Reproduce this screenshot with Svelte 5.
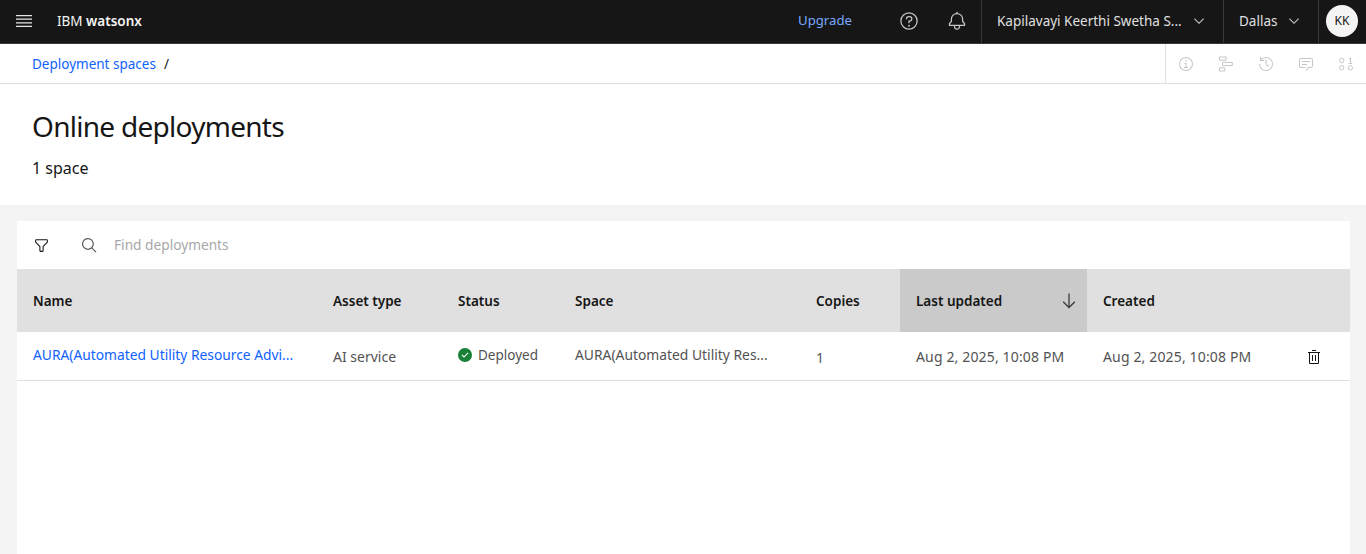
<script>
  const columns = [
    { label: 'Name', width: 300 },
    { label: 'Asset type', width: 125 },
    { label: 'Status', width: 117 },
    { label: 'Space', width: 241 },
    { label: 'Copies', width: 100 },
    { label: 'Last updated', width: 187, sorted: true },
    { label: 'Created', width: 263 }
  ];
</script>

<div class="page">
  <header class="topbar">
    <button class="menu" aria-label="Menu">
      <svg width="16" height="12" viewBox="0 0 16 12"><path d="M0 0h16v1.200H0zM0 3.600h16v1.200H0zM0 7.200h16v1.200H0zM0 10.800h16V12H0z" fill="#e8e8e8"/></svg>
    </button>
    <div class="brand">IBM <strong>watsonx</strong></div>
    <a class="upgrade" href="#upgrade">Upgrade</a>
    <button class="top-icon help" aria-label="Help">
      <svg width="20" height="20" viewBox="0 0 32 32" fill="#c6c6c6"><path d="M16,2A14,14,0,1,0,30,16,14,14,0,0,0,16,2Zm0,26A12,12,0,1,1,28,16,12,12,0,0,1,16,28Z"/><circle cx="16" cy="23.500" r="1.500"/><path d="M17,8H15.500A4.490,4.490,0,0,0,11,12.500V13h2v-.5A2.500,2.500,0,0,1,15.500,10H17a2.500,2.500,0,0,1,0,5H15v4.500h2V17a4.500,4.500,0,0,0,0-9Z"/></svg>
    </button>
    <button class="top-icon bell" aria-label="Notifications">
      <svg width="20" height="20" viewBox="0 0 32 32" fill="#c6c6c6"><path d="M28.7071,19.293,26,16.5859V13a10.0136,10.0136,0,0,0-9-9.9492V1H15V3.0508A10.0136,10.0136,0,0,0,6,13v3.5859L3.2929,19.293A1,1,0,0,0,3,20v3a1,1,0,0,0,1,1h7v.7768a5.152,5.152,0,0,0,4.5,5.1987A5.0057,5.0057,0,0,0,21,25V24h7a1,1,0,0,0,1-1V20A1,1,0,0,0,28.7071,19.293ZM19,25a3,3,0,0,1-6,0V24h6Zm8-3H5V20.4141L7.707,17.707A1,1,0,0,0,8,17V13a8,8,0,0,1,16,0v4a1,1,0,0,0,.293.707L27,20.4141Z"/></svg>
    </button>
    <div class="select account">
      <span>Kapilavayi Keerthi Swetha S...</span>
      <svg width="16" height="16" viewBox="0 0 32 32" fill="#c6c6c6"><path d="M16 22L6 12 7.400 10.600 16 19.200 24.600 10.600 26 12z"/></svg>
    </div>
    <div class="select region">
      <span>Dallas</span>
      <svg width="16" height="16" viewBox="0 0 32 32" fill="#c6c6c6"><path d="M16 22L6 12 7.400 10.600 16 19.200 24.600 10.600 26 12z"/></svg>
    </div>
    <div class="avatar-wrap"><div class="avatar">KK</div></div>
  </header>

  <nav class="crumbs">
    <div class="crumb-text"><a href="#spaces">Deployment spaces</a><span class="slash">/</span></div>
    <div class="tools">
      <svg width="16" height="16" viewBox="0 0 32 32"><path d="M17 22v-8h-4v2h2v6h-3v2h8v-2h-3zM16 8a1.500 1.500 0 1 0 1.500 1.500A1.500 1.500 0 0 0 16 8z"/><path d="M16 30a14 14 0 1 1 14-14 14 14 0 0 1-14 14zm0-26a12 12 0 1 0 12 12A12 12 0 0 0 16 4z"/></svg>
      <svg width="16" height="16" viewBox="0 0 16 16"><path d="M1.500 1h6.600v3.200H1.500zm0 10.800h5.200V15H1.500zm3-5.400h9.800v3.200H4.500z" fill="none" stroke="#c6c6c6"/></svg>
      <svg width="16" height="16" viewBox="0 0 32 32"><path d="M20.590 22L15 16.410 15 7 17 7 17 15.580 22 20.590 20.590 22z"/><path d="M16,2A13.940,13.940,0,0,0,6,6.230V2H4v8h8V8H7.080A12,12,0,1,1,4,16H2A14,14,0,1,0,16,2Z"/></svg>
      <svg width="16" height="16" viewBox="0 0 32 32"><path d="M17.740,30,16,29l4-7h6a2,2,0,0,0,2-2V8a2,2,0,0,0-2-2H6A2,2,0,0,0,4,8V20a2,2,0,0,0,2,2h9v2H6a4,4,0,0,1-4-4V8A4,4,0,0,1,6,4H26a4,4,0,0,1,4,4V20a4,4,0,0,1-4,4H21.160Z"/><path d="M8 10H24V12H8zM8 16H18V18H8z"/></svg>
      <svg width="16" height="16" viewBox="0 0 16 16" fill="none" stroke="#c6c6c6"><circle cx="3.700" cy="4.400" r="2.200"/><path d="M11 2.800l1.500-.8v5M10.500 7.500h3.800"/><circle cx="3.700" cy="11.800" r="2.200"/><circle cx="12.300" cy="11.800" r="2.200"/></svg>
    </div>
  </nav>

  <section class="intro">
    <h1>Online deployments</h1>
    <p>1 space</p>
  </section>

  <main class="content">
    <div class="card">
      <div class="toolbar">
        <svg class="filter" width="17" height="17" viewBox="0 0 32 32" fill="#161616"><path d="M18,28H14a2,2,0,0,1-2-2V18.410L4.590,11A2,2,0,0,1,4,9.590V6A2,2,0,0,1,6,4H26a2,2,0,0,1,2,2V9.590A2,2,0,0,1,27.410,11L20,18.410V26A2,2,0,0,1,18,28ZM6,6V9.590l8,8V26h4V17.590l8-8V6Z"/></svg>
        <svg class="search" width="17" height="17" viewBox="0 0 32 32" fill="#525252"><path d="M29,27.5859l-7.5521-7.5521a11.0177,11.0177,0,1,0-1.4141,1.4141L27.5859,29ZM4,13a9,9,0,1,1,9,9A9.010,9.010,0,0,1,4,13Z"/></svg>
        <span class="placeholder">Find deployments</span>
      </div>
      <table>
        <colgroup>
          {#each columns as col}<col style:width="{col.width}px" />{/each}
        </colgroup>
        <thead>
          <tr>
            {#each columns as col}
              <th class:sorted={col.sorted}>
                {col.label}
                {#if col.sorted}
                  <svg class="sort" width="20" height="20" viewBox="0 0 32 32" fill="#393939"><path d="M24.590 16.590L17 24.170 17 4 15 4 15 24.170 7.410 16.590 6 18 16 28 26 18 24.590 16.590z"/></svg>
                {/if}
              </th>
            {/each}
          </tr>
        </thead>
        <tbody>
          <tr>
            <td class="name"><a href="#aura">AURA(Automated Utility Resource Advi...</a></td>
            <td class="low">AI service</td>
            <td class="high">
              <span class="status">
                <svg width="16" height="16" viewBox="0 0 32 32"><path fill="#fff" d="M10 10h13v12H10z"/><path fill="#198038" d="M16,2A14,14,0,1,0,30,16,14,14,0,0,0,16,2ZM14,21.5908l-5-5L10.5906,15,14,18.4092,21.4097,11l1.5947,1.5811Z"/></svg>
                Deployed
              </span>
            </td>
            <td class="space">AURA(Automated Utility Res...</td>
            <td class="one">1</td>
            <td class="low date">Aug 2, 2025, 10:08 PM</td>
            <td class="low date created">
              Aug 2, 2025, 10:08 PM
              <svg class="trash" width="16" height="16" viewBox="0 0 32 32" fill="#161616"><path d="M12 12H14V24H12zM18 12H20V24H18z"/><path d="M4 6V8H6V28a2 2 0 002 2H24a2 2 0 002-2V8h2V6zM8 28V8H24V28zM12 2H20V4H12z"/></svg>
            </td>
          </tr>
        </tbody>
      </table>
    </div>
  </main>
</div>

<style>
  :global(body) { margin: 0; background: #f4f4f4; }
  .page {
    height: 554px;
    display: flex;
    flex-direction: column;
    overflow: hidden;
    font-family: "Noto Sans", "Liberation Sans", sans-serif;
    color: #161616;
    font-size: 13.5px;
  }
  a { color: #0f62fe; text-decoration: none; }
  button { background: none; border: 0; padding: 0; display: flex; }

  .topbar {
    flex: none;
    box-sizing: border-box;
    height: 44px;
    display: flex;
    align-items: center;
    background: #161616;
    border-bottom: 1px solid #393939;
    color: #e0e0e0;
  }
  .menu { margin: 0 0 2px 16px; }
  .brand { margin: 0 0 2px 25px; font-size: 13.5px; color: #f4f4f4; white-space: nowrap; }
  .brand strong { font-weight: 600; }
  .upgrade { margin: 0 47px 3px auto; color: #78a9ff; font-size: 13.2px; }
  .top-icon { margin-bottom: 2px; }
  .help { margin-right: 28px; }
  .bell { margin-right: 14px; }
  .select {
    align-self: stretch;
    display: flex;
    align-items: center;
    justify-content: space-between;
    box-sizing: border-box;
    padding: 0 16px 2px 15px;
    border-left: 1px solid #393939;
    white-space: nowrap;
  }
  .account { width: 242px; }
  .region { width: 95px; }
  .avatar-wrap {
    align-self: stretch;
    width: 48px;
    box-sizing: border-box;
    border-left: 1px solid #393939;
    padding: 0 1px 2px 0;
    display: flex;
    align-items: center;
    justify-content: center;
  }
  .avatar {
    width: 32px;
    height: 32px;
    border-radius: 50%;
    background: #f4f4f4;
    color: #161616;
    font-size: 12px;
    display: flex;
    align-items: center;
    justify-content: center;
  }

  .crumbs {
    flex: none;
    box-sizing: border-box;
    height: 40px;
    background: #fff;
    border-bottom: 1px solid #e0e0e0;
    display: flex;
    align-items: stretch;
    justify-content: space-between;
  }
  .crumb-text { padding-left: 32px; display: flex; align-items: center; }
  .slash { margin-left: 8px; color: #161616; }
  .tools {
    width: 201px;
    box-sizing: border-box;
    padding: 0 12px;
    border-left: 1px solid #e0e0e0;
    display: flex;
    align-items: center;
    justify-content: space-between;
  }
  .tools svg { fill: #c6c6c6; }
  .tools svg:last-child, .tools svg:nth-child(2) { fill: none; }

  .intro {
    flex: none;
    box-sizing: border-box;
    height: 121px;
    background: #fff;
    padding: 24px 32px 0;
  }
  h1 { margin: 0; font-size: 28px; font-weight: 400; line-height: 36px; letter-spacing: -0.72px; }
  p { margin: 12px 0 0; font-size: 16px; line-height: 24px; }

  .content { flex: 1; padding: 16px 16px 0 17px; min-height: 0; }
  .card { background: #fff; height: 100%; }
  .toolbar { height: 48px; display: flex; align-items: center; }
  .filter { margin-left: 16px; }
  .search { margin-left: 31px; }
  .placeholder { margin: 0 0 1px 16px; color: #a8a8a8; font-size: 13.7px; }

  table { border-collapse: collapse; table-layout: fixed; width: 1333px; }
  th {
    height: 63px;
    background: #e0e0e0;
    padding: 0 16px;
    text-align: left;
    font-weight: 600;
    position: relative;
  }
  th.sorted { background: #cacaca; }
  .sort { position: absolute; right: 8px; top: 22px; }
  td {
    height: 48px;
    box-sizing: border-box;
    padding: 0 16px;
    border-bottom: 1px solid #e0e0e0;
    color: #525252;
    font-size: 14px;
    white-space: nowrap;
    overflow: hidden;
    vertical-align: middle;
  }
  td.low { padding-top: 1px; }
  td.one { padding-top: 3px; }
  td.high { padding-top: 1px; }
  td.name { padding-bottom: 2px; font-size: 13.8px; }
  td.space { padding-bottom: 3px; font-size: 13.85px; }
  td.date { letter-spacing: 0.15px; }
  .status { display: inline-flex; align-items: center; gap: 5px; font-size: 13.5px; margin-left: -1px; }
  .created { position: relative; }
  .trash { position: absolute; left: 219px; top: 17px; }
</style>
